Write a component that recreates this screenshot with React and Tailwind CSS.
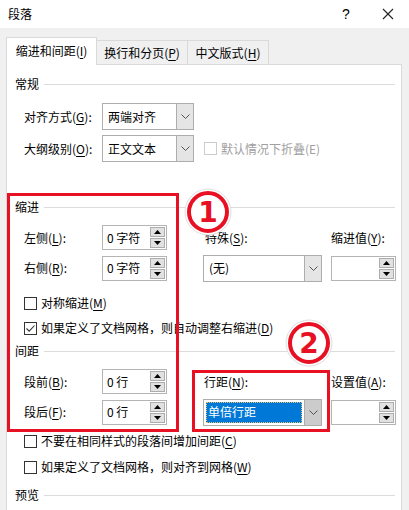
const U = ({ children }) => <span className="underline underline-offset-[2px]">{children}</span>;

function Tri({ up }) {
  return (
    <svg width="7" height="4" viewBox="0 0 7 4">
      <polygon points={up ? "0,4 7,4 3.5,0" : "0,0 7,0 3.5,4"} fill="#000" />
    </svg>
  );
}

function Spin({ value }) {
  return (
    <div className="w-[65px] h-[25px] border border-[#b4b4b4] bg-white flex items-center justify-between">
      <span className="pl-[4px]">{value}</span>
      <div className="flex flex-col gap-[1px] pr-[1px]">
        <div className="w-[15px] h-[10px] border border-[#adadad] bg-[#e1e1e1] flex items-center justify-center">
          <Tri up />
        </div>
        <div className="w-[15px] h-[10px] border border-[#adadad] bg-[#e1e1e1] flex items-center justify-center">
          <Tri />
        </div>
      </div>
    </div>
  );
}

function Chevron() {
  return (
    <svg width="9" height="5" viewBox="0 0 9 5">
      <path d="M0.5 0.5 L4.5 4.5 L8.5 0.5" fill="none" stroke="#555" strokeWidth="1" />
    </svg>
  );
}

function Combo({ value, wide, selected, pressed }) {
  return (
    <div className={`h-[27px] border border-[#adadad] bg-white flex ${wide ? "w-[119px]" : "w-[92px]"}`}>
      <div className="flex-1 flex items-center p-[2px]">
        {selected ? (
          <div className="w-full h-full bg-[#0078d7] text-white flex items-center pl-[2px] outline outline-1 outline-dotted outline-[#e8c070] -outline-offset-1">
            {value}
          </div>
        ) : (
          <span className="pl-[3px]">{value}</span>
        )}
      </div>
      <div className={`w-[17px] border-l border-[#adadad] flex items-center justify-center ${pressed ? "bg-[#cccccc]" : "bg-[#e5e5e5]"}`}>
        <Chevron />
      </div>
    </div>
  );
}

function Check({ checked, disabled, children }) {
  return (
    <div className="flex items-center gap-[4px]">
      <div className={`w-[13px] h-[13px] border bg-white flex items-center justify-center ${disabled ? "border-[#cccccc]" : "border-[#333333]"}`}>
        {checked && (
          <svg width="11" height="11" viewBox="0 0 11 11">
            <path d="M1.5 5.5 L4.2 8.2 L9.5 2.5" fill="none" stroke="#333" strokeWidth="1.1" />
          </svg>
        )}
      </div>
      <span className={disabled ? "text-[#a0a0a0]" : ""}>{children}</span>
    </div>
  );
}

function Group({ title, className }) {
  return (
    <div className={`h-[18px] flex items-center pl-[8px] pr-[6px] ${className}`}>
      <span>{title}</span>
      <div className="flex-1 h-px bg-[#dcdcdc] ml-[5px]" />
    </div>
  );
}

function Badge({ n, className }) {
  return (
    <svg width="50" height="50" viewBox="0 0 50 50" className={`absolute ${className}`}>
      <circle cx="25" cy="25" r="23" fill="#ffffff" stroke="#dedede" strokeWidth="1" />
      <circle cx="25" cy="25" r="19" fill="#ffffff" stroke="#e81123" strokeWidth="4" />
      <text
        x="25"
        y="35"
        textAnchor="middle"
        fontFamily="DejaVu Sans"
        fontWeight="bold"
        fontSize="28"
        fill="#e81123"
        stroke="#ffffff"
        strokeWidth="1"
        paintOrder="stroke"
      >
        {n}
      </text>
    </svg>
  );
}

export default function App() {
  return (
    <div className="w-[409px] h-[510px] overflow-hidden relative bg-[#f0f0f0] text-[12px] text-black leading-none font-['Noto_Sans_CJK_SC','Noto_Sans',sans-serif]">
      <header className="h-[28px] bg-white flex items-center pl-[8px]">
        <span className="flex-1">段落</span>
        <span className="w-[20px] text-center text-[14px] mr-[26px] font-['Liberation_Sans',sans-serif]">?</span>
        <svg width="12" height="12" viewBox="0 0 12 12" className="mr-[15px]">
          <path d="M1 1 L11 11 M11 1 L1 11" stroke="#222" strokeWidth="1.1" />
        </svg>
      </header>

      <div className="pt-[9px] pl-[6px] pr-[7px]">
        <div className="flex items-end h-[27px]">
          <div className="relative z-10 -mb-px w-[91px] h-[28px] bg-white border-x border-t border-[#d9d9d9] flex items-center justify-center pb-[1px]">
            缩进和间距(<U>I</U>)
          </div>
          <div className="w-[91px] h-[24px] border-t border-r border-[#d9d9d9] flex items-center justify-center">
            换行和分页(<U>P</U>)
          </div>
          <div className="w-[81px] h-[24px] border-t border-r border-[#d9d9d9] flex items-center justify-center">
            中文版式(<U>H</U>)
          </div>
        </div>

        <div className="h-[460px] bg-white border border-[#d9d9d9]">
          <Group title="常规" className="mt-[10px]" />

          <div className="mt-[10px] h-[27px] flex items-center pl-[17px]">
            <span className="w-[78px]">对齐方式(<U>G</U>):</span>
            <Combo value="两端对齐" />
          </div>
          <div className="mt-[5px] h-[27px] flex items-center pl-[17px]">
            <span className="w-[78px]">大纲级别(<U>O</U>):</span>
            <Combo value="正文文本" />
            <div className="ml-[10px]">
              <Check disabled>默认情况下折叠(E)</Check>
            </div>
          </div>

          <Group title="缩进" className="mt-[36px]" />

          <div className="mt-[9px] h-[25px] flex items-center pl-[17px]">
            <span className="w-[78px]">左侧(<U>L</U>):</span>
            <Spin value="0 字符" />
            <span className="ml-[36px] w-[119px] pl-[2px]">特殊(<U>S</U>):</span>
            <span className="ml-[9px]">缩进值(<U>Y</U>):</span>
          </div>
          <div className="mt-[4px] h-[28px] flex items-center pl-[17px]">
            <span className="w-[78px]">右侧(<U>R</U>):</span>
            <Spin value="0 字符" />
            <div className="ml-[36px]">
              <Combo value="(无)" wide />
            </div>
            <div className="ml-[9px]">
              <Spin value="" />
            </div>
          </div>

          <div className="mt-[12px] h-[18px] flex items-center pl-[17px]">
            <Check>对称缩进(<U>M</U>)</Check>
          </div>
          <div className="mt-[7px] h-[18px] flex items-center pl-[17px]">
            <Check checked>如果定义了文档网格，则自动调整右缩进(<U>D</U>)</Check>
          </div>

          <Group title="间距" className="mt-[5px]" />

          <div className="mt-[9px] h-[25px] flex items-center pl-[17px]">
            <span className="w-[78px]">段前(<U>B</U>):</span>
            <Spin value="0 行" />
            <span className="ml-[36px] w-[119px] pl-[1px]">行距(<U>N</U>):</span>
            <span className="ml-[9px]">设置值(<U>A</U>):</span>
          </div>
          <div className="mt-[4px] h-[28px] flex items-center pl-[17px]">
            <span className="w-[78px]">段后(<U>F</U>):</span>
            <Spin value="0 行" />
            <div className="ml-[36px]">
              <Combo value="单倍行距" wide selected pressed />
            </div>
            <div className="ml-[9px]">
              <Spin value="" />
            </div>
          </div>

          <div className="mt-[6px] h-[18px] flex items-center pl-[17px]">
            <Check>不要在相同样式的段落间增加间距(<U>C</U>)</Check>
          </div>
          <div className="mt-[8px] h-[18px] flex items-center pl-[17px]">
            <Check>如果定义了文档网格，则对齐到网格(<U>W</U>)</Check>
          </div>

          <Group title="预览" className="mt-[10px]" />
        </div>
      </div>

      {/* annotations */}
      <div className="absolute left-[7px] top-[193px] w-[172px] h-[239px] border-[3px] border-[#e81123]" />
      <div className="absolute left-[192px] top-[370px] w-[138px] h-[62px] border-[3px] border-[#e81123]" />
      <Badge n="1" className="left-[183px] top-[187px]" />
      <Badge n="2" className="left-[284px] top-[318px]" />
    </div>
  );
}
